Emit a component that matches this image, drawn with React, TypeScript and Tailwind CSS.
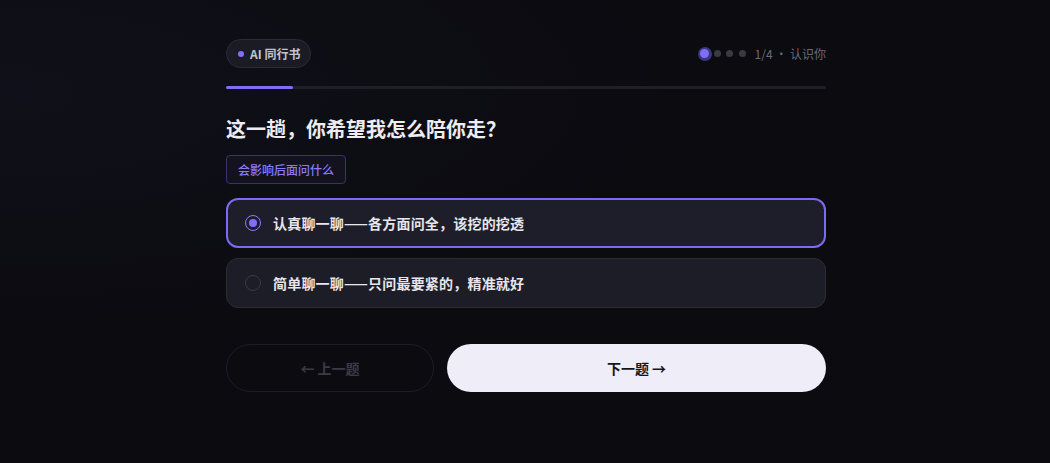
import React from "react";

const font = { fontFamily: '"Noto Sans CJK SC", "Noto Sans", sans-serif' };

const App: React.FC = () => {
    return (
        <div
            className="min-h-[463px] w-full bg-[#0b0b10] bg-[radial-gradient(ellipse_at_0%_20%,#10101a_0%,#0b0b10_45%)] pl-[2px] text-white"
            style={font}
        >
            <div className="mx-auto w-[600px] pt-[39px]">
                {/* header */}
                <div className="flex items-center justify-between">
                    <div className="flex h-[29px] items-center gap-[6px] rounded-full border border-[#2c2c38] bg-[#1b1b25] pl-[11px] pr-[10px]">
                        <span className="h-[6px] w-[6px] rounded-full bg-[#8070f4]"></span>
                        <span className="text-[12px] font-bold text-[#c4c4cf]">AI 同行书</span>
                    </div>
                    <div className="flex items-center">
                        <span className="flex h-[14px] w-[14px] items-center justify-center rounded-full bg-[#3b3680]">
                            <span className="h-[9px] w-[9px] rounded-full bg-[#7f6ff7]"></span>
                        </span>
                        <span className="ml-[2px] h-[7px] w-[7px] rounded-full bg-[#3a3a42]"></span>
                        <span className="ml-[5.5px] h-[7px] w-[7px] rounded-full bg-[#3a3a42]"></span>
                        <span className="ml-[5.5px] h-[7px] w-[7px] rounded-full bg-[#3a3a42]"></span>
                        <span className="ml-[9px] text-[12px] text-[#6a6a78]">1/4 · 认识你</span>
                    </div>
                </div>

                {/* progress */}
                <div className="mt-[18px] h-[3px] w-full rounded-full bg-[#1f1f27]">
                    <div className="h-[3px] w-[67px] rounded-full bg-[#7f6ff7]"></div>
                </div>

                {/* question */}
                <h1 className="mt-[26px] text-[20px] font-bold leading-[28px] text-[#ececf1]">
                    这一趟，你希望我怎么陪你走？
                </h1>
                <div className="mt-[12px] inline-flex h-[29px] items-center rounded-[4px] border border-[#3a3270] bg-[#14121f] px-[11px] text-[12px] font-medium text-[#8a7cf7]">
                    会影响后面问什么
                </div>

                {/* options */}
                <div className="mt-[14px] flex flex-col gap-[10px]">
                    <div className="flex h-[50px] items-center gap-[12px] rounded-[12px] border-2 border-[#7a6bf0] bg-[#1e1e2a] px-[17px]">
                        <span className="flex h-[16px] w-[16px] items-center justify-center rounded-full border-[1.5px] border-[#8a7cf7]">
                            <span className="h-[8px] w-[8px] rounded-full bg-[#7f6ff7]"></span>
                        </span>
                        <span className="text-[14px] font-bold tracking-[0.2px] text-[#e6e6ec]">
                            认真聊一聊——各方面问全，该挖的挖透
                        </span>
                    </div>
                    <div className="flex h-[50px] items-center gap-[12px] rounded-[12px] border border-[#2c2c37] bg-[#1d1d28] px-[18px]">
                        <span className="h-[16px] w-[16px] rounded-full border border-[#3a3a46]"></span>
                        <span className="text-[14px] font-bold tracking-[0.2px] text-[#e6e6ec]">
                            简单聊一聊——只问最要紧的，精准就好
                        </span>
                    </div>
                </div>

                {/* nav */}
                <div className="mt-[36px] flex gap-[13px]">
                    <button className="flex h-[48px] w-[208px] items-center justify-center rounded-full border border-[#1d1d25] text-[14px] font-bold text-[#3b3b48]">
                        ← 上一题
                    </button>
                    <button className="flex h-[48px] flex-1 items-center justify-center rounded-full bg-[#efedf8] text-[14px] font-bold text-[#15151c]">
                        下一题 →
                    </button>
                </div>
            </div>
        </div>
    );
};

export default App;
